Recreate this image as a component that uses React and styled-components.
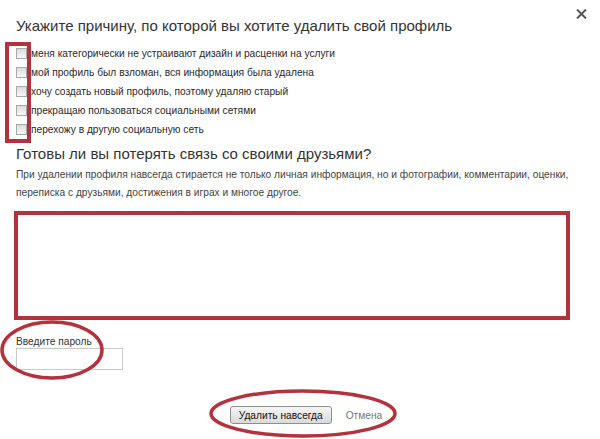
import React from 'react';
import styled, { createGlobalStyle } from 'styled-components';

const GlobalStyle = createGlobalStyle`
  html, body {
    margin: 0;
    padding: 0;
    background: #fff;
  }
  body {
    font-family: "Liberation Sans", Arial, sans-serif;
    color: #333;
  }
`;

const reasons = [
  'меня категорически не устраивают дизайн и расценки на услуги',
  'мой профиль был взломан, вся информация была удалена',
  'хочу создать новый профиль, поэтому удаляю старый',
  'прекращаю пользоваться социальными сетями',
  'перехожу в другую социальную сеть'
];

const RED = '#b3323b';

class DeleteProfile extends React.Component {
  constructor(props) {
    super(props);
    this.state = {
      checked: [false, false, false, false, false],
      password: ''
    };
  }

  onToggle = i => {
    const checked = this.state.checked.slice();
    checked[i] = !checked[i];
    this.setState({ checked });
  };

  onChange = e => {
    this.setState({ [e.target.name]: e.target.value });
  };

  render() {
    return (
      <Dialog>
        <Close aria-label="close">
          <svg width="11" height="10" viewBox="0 0 11 10">
            <path d="M1 0.5 L10 9.5 M10 0.5 L1 9.5" stroke="#555" strokeWidth="2" />
          </svg>
        </Close>
        <Title>Укажите причину, по которой вы хотите удалить свой профиль</Title>

        <ReasonList>
          <CheckMark />
          {reasons.map((r, i) => (
            <Reason key={i}>
              <Check
                type="checkbox"
                checked={this.state.checked[i]}
                onChange={() => this.onToggle(i)}
              />
              <span>{r}</span>
            </Reason>
          ))}
        </ReasonList>

        <Subtitle>Готовы ли вы потерять связь со своими друзьями?</Subtitle>
        <Note>
          При удалении профиля навсегда стирается не только личная информация, но и фотографии, комментарии, оценки,
          переписка с друзьями, достижения в играх и многое другое.
        </Note>

        <Frame />

        <PasswordBlock>
          <Ring width="106" height="62" viewBox="0 0 106 62" left="-17px" top="-17px">
            <ellipse cx="53" cy="31" rx="50" ry="28" fill="none" stroke={RED} strokeWidth="3.5" />
          </Ring>
          <Label>Введите пароль</Label>
          <Input type="password" name="password" value={this.state.password} onChange={this.onChange} />
        </PasswordBlock>

        <Actions>
          <ActionGroup>
            <Ring width="190" height="51" viewBox="0 0 190 51" left="-22px" top="-18px">
              <ellipse cx="95" cy="25.5" rx="92" ry="22.5" fill="none" stroke={RED} strokeWidth="3.5" />
            </Ring>
            <Button>Удалить навсегда</Button>
            <Cancel href="#">Отмена</Cancel>
          </ActionGroup>
        </Actions>
      </Dialog>
    );
  }
}

export default function App() {
  return (
    <>
      <GlobalStyle />
      <DeleteProfile />
    </>
  );
}

const Dialog = styled.div`
  position: relative;
  width: 600px;
  height: 439px;
  box-sizing: border-box;
  padding: 16px 30px 0 16px;
  display: flex;
  flex-direction: column;
  overflow: hidden;
`;

const Close = styled.button`
  position: absolute;
  top: 9px;
  right: 13px;
  border: 0;
  background: none;
  padding: 0;
  cursor: pointer;
  line-height: 0;
`;

const Title = styled.h1`
  margin: 0;
  font-size: 15px;
  font-weight: normal;
  line-height: 20px;
  color: #333;
  white-space: nowrap;
`;

const ReasonList = styled.div`
  position: relative;
  display: flex;
  flex-direction: column;
  margin-top: 8px;
`;

const CheckMark = styled.div`
  position: absolute;
  left: -11px;
  top: -2px;
  width: 26px;
  height: 101px;
  box-sizing: border-box;
  border: 4px solid ${RED};
  pointer-events: none;
`;

const Reason = styled.label`
  display: flex;
  align-items: center;
  height: 19px;
  font-size: 10.2px;
  color: #2a2a2a;
  white-space: nowrap;
`;

const Check = styled.input`
  appearance: none;
  margin: 0 4px 0 0;
  width: 11px;
  height: 11px;
  box-sizing: border-box;
  border: 1px solid #a9a9a9;
  background: linear-gradient(#dcdcdc, #f7f7f7);
  flex-shrink: 0;
  &:checked {
    background: #6a8fc8;
  }
`;

const Subtitle = styled.h2`
  margin: 5px 0 0;
  font-size: 15px;
  font-weight: normal;
  line-height: 20px;
  color: #333;
`;

const Note = styled.p`
  margin: 2px 0 0;
  font-size: 10.2px;
  line-height: 18px;
  color: #444;
`;

const Frame = styled.div`
  margin: 9px 0 0 -2px;
  width: 556px;
  height: 109px;
  box-sizing: border-box;
  border: 4px solid ${RED};
`;

const PasswordBlock = styled.div`
  position: relative;
  display: flex;
  flex-direction: column;
  align-items: flex-start;
  margin-top: 16px;
`;

const Ring = styled.svg`
  position: absolute;
  left: ${p => p.left};
  top: ${p => p.top};
  pointer-events: none;
`;

const Label = styled.label`
  font-size: 10.2px;
  line-height: 12px;
  color: #333;
`;

const Input = styled.input`
  margin-top: 0;
  width: 107px;
  height: 22px;
  box-sizing: border-box;
  border: 1px solid #c8c8c8;
  padding: 2px 4px;
  font-size: 12px;
  outline: none;
`;

const Actions = styled.div`
  display: flex;
  justify-content: center;
  margin-top: 36px;
  padding-left: 26px;
`;

const ActionGroup = styled.div`
  position: relative;
  display: flex;
  align-items: center;
  gap: 14px;
`;

const Button = styled.button`
  height: 18px;
  padding: 0 8px;
  font-family: "Liberation Sans", Arial, sans-serif;
  font-size: 10.2px;
  color: #111;
  border: 1px solid #8e8e8e;
  border-radius: 3px;
  background: linear-gradient(#f6f6f6, #dadada);
  cursor: pointer;
`;

const Cancel = styled.a`
  font-size: 10.2px;
  color: #777;
  text-decoration: none;
`;
